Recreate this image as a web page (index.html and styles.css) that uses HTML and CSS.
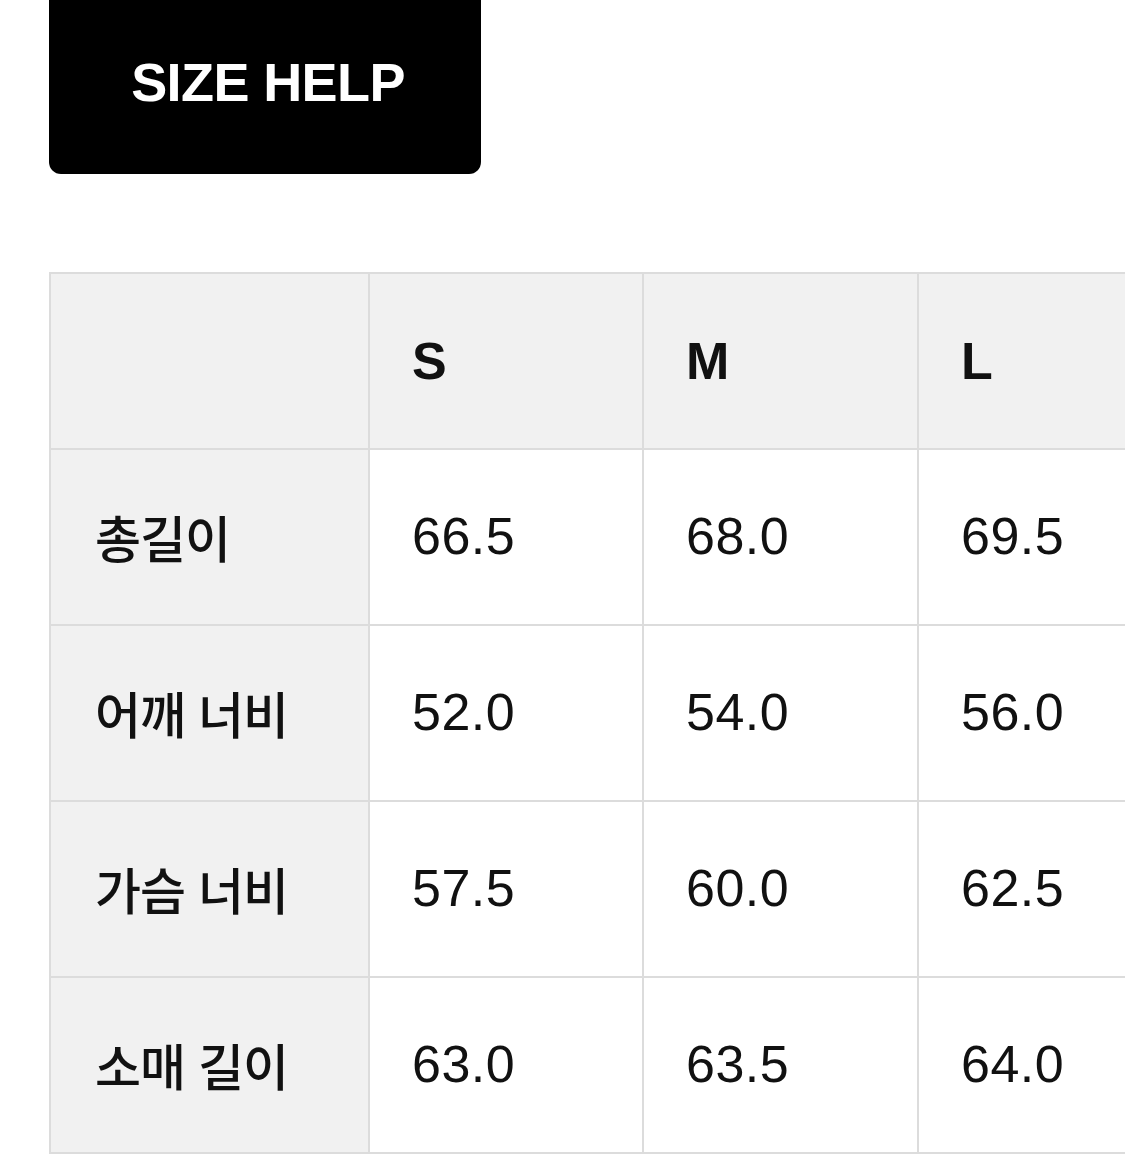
FILE: index.html
```html
<!DOCTYPE html>
<html lang="ko">
<head>
<meta charset="utf-8">
<title>Size Help</title>
<link rel="stylesheet" href="styles.css">
</head>
<body>
<div class="page">
  <div class="btn">SIZE HELP</div>
  <div class="size-table">
    <div class="cell head"></div>
    <div class="cell head size">S</div>
    <div class="cell head size">M</div>
    <div class="cell head size">L</div>

    <div class="cell label">총길이</div>
    <div class="cell val">66.5</div>
    <div class="cell val">68.0</div>
    <div class="cell val">69.5</div>

    <div class="cell label">어깨 너비</div>
    <div class="cell val">52.0</div>
    <div class="cell val">54.0</div>
    <div class="cell val">56.0</div>

    <div class="cell label">가슴 너비</div>
    <div class="cell val">57.5</div>
    <div class="cell val">60.0</div>
    <div class="cell val">62.5</div>

    <div class="cell label">소매 길이</div>
    <div class="cell val">63.0</div>
    <div class="cell val">63.5</div>
    <div class="cell val">64.0</div>
  </div>
</div>
</body>
</html>
```

FILE: styles.css
```css
html, body {
  margin: 0;
  padding: 0;
  background: #ffffff;
  overflow: hidden;
}

.page {
  box-sizing: border-box;
  width: 1125px;
  overflow: hidden;
  padding-left: 49px;
  font-family: "Liberation Sans", "Noto Sans CJK KR", sans-serif;
  color: #111111;
}

.btn {
  width: 432px;
  height: 174px;
  box-sizing: border-box;
  background: #000000;
  border-radius: 0 0 12px 12px;
  color: #ffffff;
  font-family: "Liberation Sans", sans-serif;
  font-weight: 700;
  font-size: 54px;
  letter-spacing: -0.6px;
  display: flex;
  align-items: center;
  justify-content: center;
  padding-bottom: 10px;
  padding-left: 6px;
}

.size-table {
  margin-top: 98px;
  display: grid;
  grid-template-columns: 319px 274px 275px 275px;
  grid-auto-rows: 176px;
  border-top: 2px solid #dcdcdc;
  border-left: 2px solid #dcdcdc;
  width: max-content;
}

.cell {
  border-right: 2px solid #dcdcdc;
  border-bottom: 2px solid #dcdcdc;
  display: flex;
  align-items: center;
  padding-left: 42px;
  padding-bottom: 3px;
  font-size: 52px;
  color: #111111;
}

.head {
  background: #f1f1f1;
}

.size {
  font-weight: 700;
  padding-bottom: 0;
}

.label {
  background: #f1f1f1;
  font-family: "Noto Sans CJK KR", sans-serif;
  font-weight: 500;
  font-size: 50px;
  padding-left: 44px;
  letter-spacing: -1px;
}

.val {
  font-weight: 400;
  letter-spacing: 0.5px;
}
```
